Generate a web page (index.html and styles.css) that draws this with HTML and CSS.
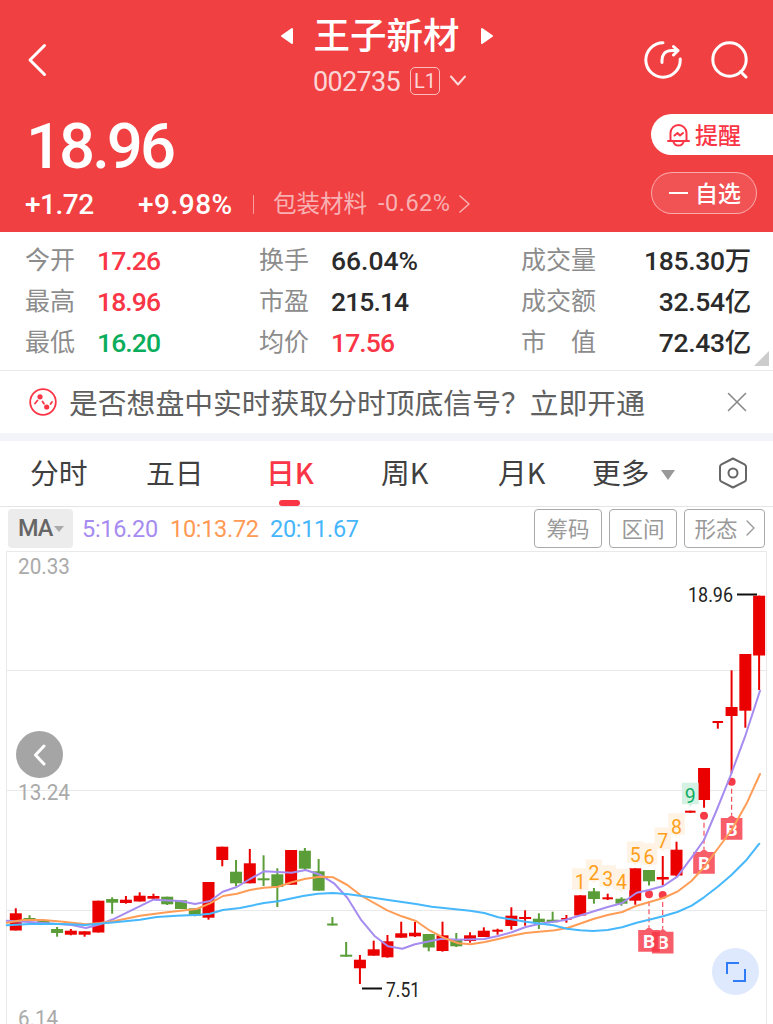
FILE: index.html
```
<!DOCTYPE html>
<html lang="zh-CN">
<head>
<meta charset="UTF-8">
<meta name="viewport" content="width=device-width, initial-scale=1.0">
<link rel="stylesheet" href="styles.css">
<title>王子新材 002735</title>
</head>
<body>
<header class="header">
  <div class="topbar">
    <svg class="back" width="20" height="34" viewBox="0 0 20 34"><path d="M17.500 2.500 3 17 17.500 31.500"/></svg>
    <div class="title">
      <div class="name">
        <svg width="14" height="18" viewBox="0 0 14 18"><path d="M12 2v14L2 9z"/></svg>
        <h1>王子新材</h1>
        <svg width="14" height="18" viewBox="0 0 14 18"><path d="M2 2v14l10-7z"/></svg>
      </div>
      <div class="code">
        <span class="code-num">002735</span>
        <span class="level">L1</span>
        <svg width="16" height="12" viewBox="0 0 16 12"><path d="M1 1.500 8 9.500 15 1.500"/></svg>
      </div>
    </div>
    <div class="actions">
      <svg width="38" height="38" viewBox="0 0 38 38"><path d="M19 1.800A17.200 17.200 0 1 0 36.200 18M18 21.500c-.6-8 3-12 10-12h5M29.500 5.500 34 9.500 29.500 14"/></svg>
      <svg width="38" height="38" viewBox="0 0 38 38"><circle cx="18.500" cy="18.500" r="16.700"/><path d="M29.500 30.500 35 36"/></svg>
    </div>
  </div>
  <div class="quote">
    <div>
      <div class="price">18.96</div>
      <div class="change">
        <span class="diff">+1.72</span>
        <span class="rate">+9.98%</span>
        <i class="divider"></i>
        <span class="sector">包装材料</span>
        <span class="sector-rate">-0.62%</span>
        <svg width="11" height="18" viewBox="0 0 11 18"><path d="M1 1 10 9 1 17"/></svg>
      </div>
    </div>
    <div class="buttons">
      <div class="remind">
        <svg width="23" height="24" viewBox="0 0 23 24"><path d="M3.500 17.500V10a8 8 0 0 1 16 0v7.500M1 18h21M6.500 19c1.500 4.700 8.500 4.700 10 0M7.500 12.500 10.500 10l2.500 2.500 3-2.500"/></svg>
        <span>提醒</span>
      </div>
      <div class="watch"><i class="minus"></i><span>自选</span></div>
    </div>
  </div>
</header>

<section class="stats">
  <span class="label">今开</span><b class="up">17.26</b>
  <span class="label">换手</span><b class="wide">66.04%</b>
  <span class="label">成交量</span><b class="right">185.30万</b>
  <span class="label">最高</span><b class="up">18.96</b>
  <span class="label">市盈</span><b>215.14</b>
  <span class="label">成交额</span><b class="right">32.54亿</b>
  <span class="label">最低</span><b class="down">16.20</b>
  <span class="label">均价</span><b class="up">17.56</b>
  <span class="label">市　值</span><b class="right">72.43亿</b>
  <i class="corner"></i>
</section>

<section class="notice">
  <svg class="notice-icon" width="28" height="28" viewBox="0 0 28 28">
    <circle class="ring" cx="14" cy="14" r="12.800"/>
    <path d="M6 15.500 8.500 12.500M13.500 13.500 15 15.800M21.500 16 23 14"/>
    <circle class="dot" cx="11" cy="8.800" r="2.600"/><circle class="dot" cx="17.700" cy="19" r="2.600"/>
  </svg>
  <p>是否想盘中实时获取分时顶底信号？立即开通</p>
  <svg class="close" width="20" height="20" viewBox="0 0 20 20"><path d="M1.500 1.500 18.500 18.500M18.500 1.500 1.500 18.500"/></svg>
</section>

<nav class="tabs">
  <a>分时</a>
  <a>五日</a>
  <a class="active">日K</a>
  <a>周K</a>
  <a>月K</a>
  <a>更多<i class="arrow"></i></a>
  <svg class="gear" width="30" height="32" viewBox="0 0 30 32"><path d="M15 1.500 26.500 7.300Q28 8.200 28 9.800V22.200Q28 23.800 26.500 24.700L15 30.500 3.500 24.700Q2 23.800 2 22.200V9.800Q2 8.200 3.500 7.300Z"/><circle cx="15" cy="16" r="4.500"/></svg>
</nav>

<div class="toolbar">
  <span class="ma">MA<i class="arrow small"></i></span>
  <span class="ma5">5:16.20</span>
  <span class="ma10">10:13.72</span>
  <span class="ma20">20:11.67</span>
  <div class="tools">
    <button>筹码</button>
    <button>区间</button>
    <button class="wide">形态<svg width="9" height="16" viewBox="0 0 9 16"><path d="M1 1 8 8 1 15"/></svg></button>
  </div>
</div>

<div class="chart">
  <svg id="kline" width="773" height="473" viewBox="0 551 773 473"></svg>
  <div class="round prev"><svg width="14" height="22" viewBox="0 0 14 22"><path d="M11 2 2.500 11 11 20"/></svg></div>
  <div class="round full"><svg width="22" height="22" viewBox="0 0 22 22"><path d="M2 13V2H14M20 8V20H8"/></svg></div>
</div>

<script>
  // [color, top, bottom, high, low, width]
  const candles = [
    ['r', 913.3, 930.5, 908.3, 930.5], ['g', 918, 920, 915.3, 920], ['g', 921, 923, 919.3, 925],
    ['g', 929, 933, 927, 936.7], ['r', 930.7, 934.7, 929, 935.3], ['r', 931.3, 934.7, 931.3, 936.7],
    ['r', 900.7, 932.5, 900.7, 932.5], ['g', 899, 902.7, 897.3, 913.7], ['r', 899.7, 903, 896, 903.7],
    ['r', 895.7, 901.5, 892.3, 901.5], ['r', 896, 898.7, 893.7, 899.7], ['g', 896.7, 904.3, 896.7, 905],
    ['g', 900.3, 909, 900.3, 909], ['g', 908.3, 915.7, 908.3, 916.3], ['r', 882, 917.7, 882, 919.7],
    ['r', 846.7, 860, 846.7, 866.3], ['g', 871.7, 883.3, 860, 886], ['r', 863.3, 883.3, 849, 883.3],
    ['g', 878.3, 880.3, 855.3, 886], ['g', 874.3, 887, 868.3, 907], ['r', 850, 884.7, 850, 884.7],
    ['g', 850.7, 868.7, 848, 870.3], ['g', 871.3, 890.7, 859, 890.7], ['g', 923.5, 925.5, 917, 925.5, 10.5],
    ['g', 954.7, 956.7, 942, 956.7], ['r', 959.7, 968.3, 955, 984], ['r', 949.3, 955.7, 940.7, 955.7],
    ['r', 941.3, 957.3, 935, 957.7], ['r', 933.3, 937.7, 921.7, 937.7], ['r', 932.7, 936.3, 922, 937],
    ['g', 934, 947.5, 934, 951.3], ['r', 935.3, 951, 921.7, 951.7], ['g', 939.3, 946.3, 933, 947],
    ['r', 935.3, 941, 932.3, 942.7], ['r', 930.7, 937, 927.3, 937], ['r', 929.7, 931.7, 928.7, 934.7, 10.5],
    ['r', 915.7, 926, 907.3, 929.7], ['r', 917, 919, 910.3, 925.7], ['g', 918.7, 922, 913.3, 929],
    ['g', 919.7, 922.3, 911.7, 922.3], ['r', 918, 919.7, 915, 922.7, 10.5], ['r', 895.3, 915.5, 895.3, 915.5],
    ['g', 891.3, 899, 888, 903.7], ['r', 897.3, 899.3, 893.7, 900, 10.5], ['g', 898.7, 903.7, 897.3, 905.7],
    ['r', 868.3, 900.7, 868.3, 904.7], ['g', 870, 881.3, 870, 885.5], ['r', 877, 879.5, 856, 885],
    ['r', 849.7, 875.5, 841.7, 876.7], ['r', 810.7, 812.7, 810.7, 812.7, 10.5], ['r', 768, 800, 768, 807.7],
    ['r', 721, 723, 721, 728.7, 10.5], ['r', 707, 716, 670.3, 773.3], ['r', 654, 710.7, 654, 727.7],
    ['r', 595.7, 655.5, 595.7, 690]
  ];

  const averages = {
    ma5: '6.7,920.7 33,922.3 72,925 86,928 100,924.3 113,919.3 153.3,899.7 180,901 195,904 210,901 222.7,891.7 236.7,887 250,879 264,871.3 291.7,872.7 305.7,870 320,874.7 334,883.3 347.3,897.7 360.7,919.3 374.3,935.7 388,946.3 402.3,948.7 415,944.3 442,938.7 456.7,939.7 484.3,939 498,936 511.7,932.3 525.7,927 540,923.7 565,920 580,915.5 594,911.3 607.7,907 621.7,903.3 636.7,892.7 649,890 663.3,886 677.3,876.7 691.7,857.3 704,840 716.7,810 730,777 745,736.7 760,690.7',
    ma10: '6.7,922.7 23,920 43,920 63,921.7 86,924.3 100,923 115,921 140,915.7 167,912.3 196.7,909 210,903.3 223,896 237,893.7 250,890 264,887.7 278,886.7 291.7,882.3 305.7,878.7 320,876.7 333.3,877.3 347.3,885 361.7,896 387.3,910.3 401.7,916.3 416,921 430,930.7 445,938.3 458.3,943.3 470.7,944.3 485,942 498.3,939 511.7,935.7 525.7,933 555,930.3 568.3,927.7 593.3,919 607.7,915 622.3,912 636.7,905.7 663.3,898 677.3,891.7 691.7,880.7 704,867.3 716.7,850 731.7,830 746.7,803.3 760,774',
    ma20: '6.7,925.3 30,924 50,923.7 70,924.3 85,925 115,922.3 140,919.7 156.7,917 176.7,915.7 200,914.7 210,913.7 222.7,910 240,908 264,903 278,901.3 303,896 318,893.7 333,893 346.7,894 361.7,896 390,900.3 416,904 431.7,906.7 470,910.7 484.3,913 498.3,917.3 525.7,921.7 553.3,925.3 566.7,928.7 580,930.3 593,931 607.7,930 622,927.3 636.7,922.7 649,919.7 663,916.3 677.3,912 691.7,905.7 704,897.3 717.7,886.7 731.7,874.7 746.7,859.7 759.3,843.7'
  };

  // baselines of the 1-9 sequence, starting at candle 41
  const counts = [888.7, 880, 885.7, 889.3, 862, 863.7, 848, 833.7, 803.3];

  // buy signals: [x, dot y, flag top]
  const signals = [[731.6, 781.7, 818], [704, 815.7, 852], [662.7, 895, 931.7], [649, 894.3, 930]];

  const centerX = i => 15.8 + i * 13.765;
  let out = '<path class="grid" d="M6.500 1024V551.500H766.500V1024M7 670.500H766M7 790.500H766M7 910.500H766"/>';

  candles.forEach(([color, top, bottom, high, low, width = 12], i) => {
    const x = centerX(i);
    out += `<g class="${color}"><rect x="${x - width / 2}" y="${top}" width="${width}" height="${bottom - top}"/>`;
    out += `<rect x="${x - 1}" y="${high}" width="2" height="${low - high}"/></g>`;
  });

  counts.forEach((y, i) => {
    const x = centerX(41 + i);
    out += `<g class="count${i === 8 ? ' last' : ''}"><path d="M${x - 8.3} ${y - 20.500}h16.600v21.500h-6l-2.300 2.500-2.300-2.500h-6z"/>`;
    out += `<text x="${x}" y="${y}">${i + 1}</text></g>`;
  });

  signals.forEach(([x, dot, y]) => {
    out += `<g class="signal"><circle cx="${x}" cy="${dot}" r="4"/><path class="stick" d="M${x} ${dot + 7}V${y - 3}"/>`;
    out += `<path class="flag" d="M${x - 10.8} ${y}h6.800l4-3 4 3h6.800v21.800h-21.600z"/><text x="${x}" y="${y + 17.5}">B</text></g>`;
  });

  for (const name in averages) {
    out += `<polyline class="line ${name}" points="${averages[name]}"/>`;
  }

  out += '<path class="mark" d="M737 594.500H757M362 988.500H382"/>';
  out += '<text class="peak" x="688" y="602" textLength="45" lengthAdjust="spacingAndGlyphs">18.96</text>';
  out += '<text class="peak" x="386" y="996.500" textLength="34" lengthAdjust="spacingAndGlyphs">7.51</text>';
  out += '<text class="axis" x="18" y="573.500" textLength="52" lengthAdjust="spacingAndGlyphs">20.33</text>';
  out += '<text class="axis" x="18" y="799.500" textLength="52" lengthAdjust="spacingAndGlyphs">13.24</text>';
  out += '<text class="axis" x="18" y="1026" textLength="40" lengthAdjust="spacingAndGlyphs">6.14</text>';

  document.getElementById('kline').innerHTML = out;
</script>
</body>
</html>
```
FILE: styles.css
```
* {
  box-sizing: border-box;
}

body {
  margin: 0;
  width: 773px;
  height: 1024px;
  overflow: hidden;
  background: #fff;
  color: #2b2b2b;
  font-family: Roboto, "Noto Sans CJK SC", sans-serif;
}

svg {
  display: block;
  flex: none;
  fill: none;
  stroke-linecap: round;
  stroke-linejoin: round;
}

/* header */
.header {
  height: 232px;
  background: #f04042;
  color: #fff;
}

.topbar {
  display: grid;
  grid-template-columns: 1fr auto 1fr;
  height: 108px;
  padding: 0 27px;
}

.back {
  margin-top: 43px;
  stroke: #fff;
  stroke-width: 3;
}

.title {
  display: flex;
  flex-direction: column;
  align-items: center;
}

.name {
  display: flex;
  align-items: center;
  gap: 20px;
  height: 67px;
  padding-top: 4px;
}

.name svg {
  fill: #fff;
  stroke: #fff;
  stroke-width: 2;
}

h1 {
  margin: 2px 0 0;
  font-size: 36.500px;
  font-weight: 500;
  line-height: 60px;
}

.code {
  display: flex;
  align-items: center;
  height: 28px;
  padding-left: 6px;
  color: rgba(255, 255, 255, 0.8);
}

.code-num {
  margin-top: 2px;
  font-size: 27px;
  letter-spacing: -0.700px;
}

.level {
  width: 30px;
  height: 28px;
  margin: 0 10px;
  border: 1.500px solid rgba(255, 255, 255, 0.65);
  border-radius: 5px;
  font-size: 20px;
  line-height: 27px;
  text-align: center;
}

.code svg {
  stroke: rgba(255, 255, 255, 0.8);
  stroke-width: 2;
}

.actions {
  display: flex;
  justify-content: flex-end;
  gap: 29px;
  margin-right: -3px;
  padding-top: 41px;
}

.actions svg {
  stroke: #fff;
  stroke-width: 3;
}

.quote {
  display: flex;
  justify-content: space-between;
}

.price {
  height: 77px;
  padding-left: 26px;
  font-size: 63.500px;
  font-weight: 500;
  line-height: 77px;
  letter-spacing: -3px;
}

.change {
  display: flex;
  align-items: center;
  height: 38px;
  padding-left: 25px;
  font-size: 28px;
  font-weight: 500;
  letter-spacing: -0.500px;
}

.diff {
  width: 113px;
}

.rate {
  width: 115px;
  letter-spacing: 0.500px;
}

.divider {
  width: 1px;
  height: 19px;
  margin-right: 19px;
  background: rgba(255, 255, 255, 0.5);
}

.sector,
.sector-rate {
  color: rgba(255, 255, 255, 0.6);
  font-size: 23.500px;
  font-weight: 400;
  letter-spacing: 0;
}

.sector {
  margin-top: -5px;
}

.sector-rate {
  margin: -2px 8px 0 11px;
  letter-spacing: 0.500px;
}

.change svg {
  stroke: rgba(255, 255, 255, 0.6);
  stroke-width: 1.500;
}

.buttons {
  display: flex;
  flex-direction: column;
  gap: 17px;
  width: 122px;
  padding-top: 6px;
  font-size: 23px;
  font-weight: 500;
}

.remind,
.watch {
  display: flex;
  align-items: center;
}

.remind span,
.watch span {
  margin-top: -2px;
}

.remind {
  height: 41px;
  padding-left: 16px;
  border-radius: 21px 0 0 21px;
  background: #fff;
  color: #fa3545;
}

.remind svg {
  margin-right: 5px;
  stroke: #fa3545;
  stroke-width: 2;
}

.watch {
  width: 106px;
  height: 42px;
  padding-left: 17px;
  border: 1px solid rgba(255, 255, 255, 0.5);
  border-radius: 21px;
  background: rgba(255, 255, 255, 0.1);
}

.minus {
  width: 19px;
  height: 2px;
  margin-right: 7px;
  background: #fff;
}

/* stats */
.stats {
  position: relative;
  display: grid;
  grid-template-columns: 72px 162px 72px 190px 76px 1fr;
  grid-auto-rows: 41px;
  align-items: center;
  height: 139px;
  padding: 8px 22px 0 25px;
  border-bottom: 1px solid #e9e9e9;
}

.label {
  margin-top: -5px;
  color: #8c8c8c;
  font-size: 25px;
  white-space: nowrap;
}

.stats b {
  margin-top: -1px;
  font-size: 26.500px;
  font-weight: 500;
  letter-spacing: -0.900px;
}

.stats .wide {
  letter-spacing: 0;
}

.stats .right {
  margin-top: -5px;
  letter-spacing: -0.300px;
  text-align: right;
}

.stats .up {
  color: #fa3545;
}

.stats .down {
  color: #0aad5b;
}

.corner {
  position: absolute;
  right: 4px;
  bottom: 4px;
  border-bottom: 15px solid #ccc;
  border-left: 15px solid transparent;
}

/* notice */
.notice {
  display: flex;
  align-items: center;
  height: 62px;
  padding: 0 26px 0 29px;
}

.notice-icon {
  margin-right: 12px;
  stroke: #fa3545;
  stroke-width: 1.800;
}

.notice-icon .dot {
  fill: #fa3545;
  stroke: none;
}

.notice p {
  flex: 1;
  margin: 3px 0 0;
  color: #606060;
  font-size: 28.800px;
  line-height: 58px;
  white-space: nowrap;
}

.close {
  stroke: #888;
  stroke-width: 1.600;
}

/* tabs */
.tabs {
  display: flex;
  align-items: center;
  height: 74px;
  padding: 0 0 3px 30px;
  border-top: 8px solid #f2f4fa;
  border-bottom: 1px solid #e5e5e5;
  font-size: 28.800px;
}

.tabs a {
  position: relative;
  width: 116px;
  color: #404040;
  font-family: "Noto Sans CJK SC", sans-serif;
  line-height: 60px;
  white-space: nowrap;
}

.tabs a:nth-child(2) {
  width: 120px;
}

.tabs a:nth-child(4) {
  width: 117px;
}

.tabs a:nth-child(5) {
  width: 94px;
}

.tabs a:nth-child(6) {
  width: 126px;
}

.tabs .active {
  width: 115px;
  color: #fa3545;
  font-weight: 500;
}

.tabs .active::after {
  content: "";
  position: absolute;
  left: 13px;
  bottom: -4px;
  width: 21px;
  height: 6px;
  border-radius: 3px;
  background: #fa3545;
}

.arrow {
  display: inline-block;
  margin-left: 11px;
  border: 7px solid transparent;
  border-top: 10px solid #999;
  border-bottom: 0;
  vertical-align: 4px;
}

.gear {
  margin-top: 2px;
  stroke: #666;
  stroke-width: 2;
}

/* toolbar */
.toolbar {
  display: flex;
  align-items: center;
  height: 44px;
  padding: 0 8px 1px;
  font-size: 23.500px;
  letter-spacing: -0.300px;
}

.ma {
  width: 65px;
  height: 39px;
  margin-right: 9px;
  padding-left: 10px;
  border-radius: 4px;
  background: #ececec;
  color: #666;
  font-weight: 500;
  line-height: 39px;
  letter-spacing: -1px;
}

.arrow.small {
  margin-left: 2px;
  border-width: 5px;
  border-top: 6px solid #aaa;
  border-bottom: 0;
}

.toolbar .ma5 {
  width: 88px;
  color: #a68bf0;
}

.toolbar .ma10 {
  width: 100px;
  color: #ff9a55;
}

.toolbar .ma20 {
  color: #46b6fb;
}

.tools {
  display: flex;
  gap: 7px;
  margin-left: auto;
}

.tools button {
  display: flex;
  align-items: center;
  justify-content: center;
  width: 68px;
  height: 39px;
  padding: 0 0 3px;
  border: 1px solid #aaa;
  border-radius: 4px;
  background: #fff;
  color: #999;
  font-family: "Noto Sans CJK SC", sans-serif;
  font-size: 21.500px;
}

.tools .wide {
  width: 81px;
  gap: 8px;
}

.tools svg {
  margin-top: 2px;
  stroke: #999;
  stroke-width: 1.400;
}

/* chart */
.chart {
  position: relative;
  height: 473px;
}

.grid {
  stroke: #e9e9e9;
}

.r {
  fill: #eb0000;
}

.g {
  fill: #5b9d38;
}

.line {
  stroke-width: 2;
}

.line.ma5 {
  stroke: #a68bf0;
}

.line.ma10 {
  stroke: #ff9d57;
}

.line.ma20 {
  stroke: #46b8fb;
}

.count path {
  fill: #fff3e5;
}

.count text {
  fill: #ff9f1a;
  font-size: 19.500px;
  text-anchor: middle;
}

.count.last path {
  fill: #d4f1e3;
}

.count.last text {
  fill: #12ad63;
}

.signal circle {
  fill: #f63a48;
}

.signal .stick {
  stroke: #f4505c;
  stroke-width: 1.200;
  stroke-dasharray: 5 3;
  stroke-linecap: butt;
}

.signal .flag {
  fill: #f63545;
  fill-opacity: 0.8;
}

.signal text {
  fill: #fff;
  font-size: 19px;
  font-weight: 700;
  text-anchor: middle;
}

.mark {
  stroke: #111;
  stroke-width: 2;
  stroke-linecap: butt;
}

.peak {
  fill: #222;
  font-size: 20px;
}

.axis {
  fill: #aaa;
  font-size: 22.500px;
}

.round {
  position: absolute;
  display: flex;
  align-items: center;
  justify-content: center;
  width: 47px;
  height: 47px;
  border-radius: 50%;
}

.prev {
  left: 16px;
  top: 180px;
  background: #a5a5a5;
}

.prev svg {
  stroke: #fff;
  stroke-width: 3;
}

.full {
  left: 712px;
  top: 397px;
  background: #dee9fd;
}

.full svg {
  stroke: #2f7cf6;
  stroke-width: 2;
  stroke-linecap: butt;
  stroke-linejoin: miter;
}
```
